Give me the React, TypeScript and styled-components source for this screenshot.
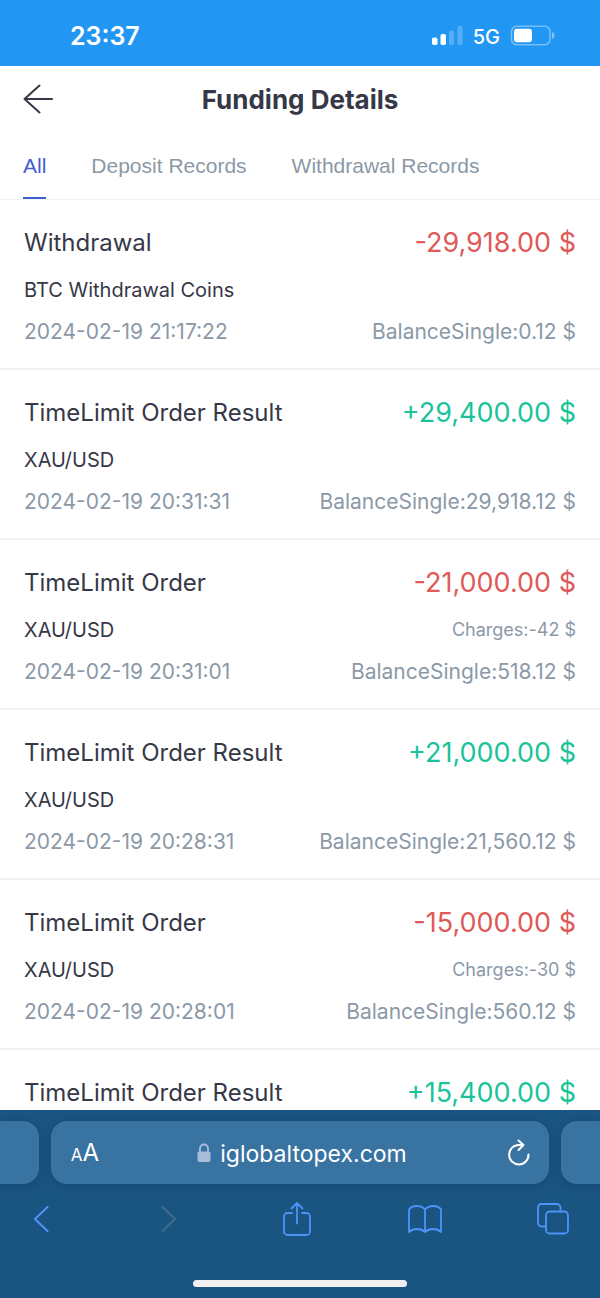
import React, { useState } from "react";
import styled, { createGlobalStyle } from "styled-components";

const colors = {
  status: "#2196f3",
  ink: "#363847",
  muted: "#8b99a7",
  accent: "#3f5fd0",
  gain: "#1cc39a",
  loss: "#de5a58",
  line: "#f1f1f3",
  chrome: "#1a5480",
  field: "#3973a1",
  tool: "#4e93fa",
};

const GlobalStyle = createGlobalStyle`
  *, *::before, *::after { box-sizing: border-box; }
  body {
    margin: 0;
    background: #fff;
    color: ${colors.ink};
    font-family: Inter, "Liberation Sans", sans-serif;
  }
  button, input { font: inherit; color: inherit; }
  h1, h2, p, ul { margin: 0; padding: 0; }
`;

const Screen = styled.div`
  display: flex;
  flex-direction: column;
  height: 100vh;
`;

const StatusBar = styled.div`
  display: flex;
  align-items: center;
  justify-content: space-between;
  flex: none;
  height: 66px;
  padding: 6px 45px 0 70px;
  background: ${colors.status};
  color: #fff;
`;

const Clock = styled.time`
  font-size: 25px;
  line-height: 32px;
  font-weight: 600;
`;

const StatusIcons = styled.div`
  display: flex;
  align-items: center;
  gap: 10px;
`;

const Network = styled.span`
  padding-top: 2px;
  font-size: 20px;
  line-height: 32px;
  font-weight: 500;
`;

const Header = styled.header`
  display: grid;
  grid-template-columns: 48px 1fr 48px;
  align-items: center;
  flex: none;
  height: 66px;
  padding: 0 16px;
`;

const IconButton = styled.button`
  display: flex;
  align-items: center;
  justify-content: center;
  width: 44px;
  height: 44px;
  padding: 0;
  border: 0;
  background: none;
  cursor: pointer;
`;

const PageTitle = styled.h1`
  padding-top: 2px;
  text-align: center;
  font-size: 26px;
  line-height: 32px;
  font-weight: 700;
`;

const Tabs = styled.nav`
  display: flex;
  gap: 45px;
  flex: none;
  height: 68px;
  padding: 0 23px;
  border-bottom: 1px solid ${colors.line};
`;

const Tab = styled.button<{ $active: boolean }>`
  padding: 0;
  border: solid transparent;
  border-width: 2px 0;
  background: none;
  font-family: "Liberation Sans", sans-serif;
  font-size: 21px;
  line-height: 24px;
  color: ${(p) => (p.$active ? colors.accent : colors.muted)};
  border-bottom-color: ${(p) => (p.$active ? colors.accent : "transparent")};
  cursor: pointer;
`;

const Records = styled.ul`
  flex: 1;
  min-height: 0;
  overflow: hidden;
  list-style: none;
`;

const Record = styled.li`
  height: 170px;
  padding: 27px 24px 0;
  border-bottom: 2px solid ${colors.line};
`;

const Line = styled.div<{ $gap?: number }>`
  display: flex;
  align-items: center;
  justify-content: space-between;
  height: 32px;
  margin-top: ${(p) => p.$gap ?? 0}px;
  line-height: 32px;
  white-space: nowrap;
`;

const Kind = styled.h2`
  font-size: 24px;
  font-weight: 400;
`;

const Amount = styled.span<{ $gain: boolean }>`
  font-size: 27px;
  color: ${(p) => (p.$gain ? colors.gain : colors.loss)};
`;

const Subject = styled.p`
  font-size: 20px;
`;

const Charges = styled.span`
  font-size: 18px;
  color: ${colors.muted};
`;

const Meta = styled.span`
  font-size: 21px;
  color: ${colors.muted};
`;

const Browser = styled.footer`
  flex: none;
  padding: 11px 0;
  background: ${colors.chrome};
`;

const AddressRow = styled.div`
  display: flex;
  gap: 12px;
`;

const NeighbourTab = styled.div<{ $side: "left" | "right" }>`
  flex: none;
  width: 39px;
  background: ${colors.field};
  border-radius: ${(p) => (p.$side === "left" ? "0 16px 16px 0" : "16px 0 0 16px")};
  box-shadow: 0 2px 10px rgba(0, 20, 60, 0.16);
`;

const AddressBar = styled.div`
  display: grid;
  grid-template-columns: 44px 1fr 44px;
  align-items: center;
  flex: 1;
  min-width: 0;
  height: 63px;
  padding: 0 8px 0 12px;
  border-radius: 16px;
  background: ${colors.field};
  color: #fff;
  box-shadow: 0 2px 10px rgba(0, 20, 60, 0.16);
`;

const TextSize = styled(IconButton)`
  align-items: baseline;
  height: 32px;
  line-height: 32px;
  font-size: 24px;
`;

const SmallA = styled.span`
  font-size: 17px;
`;

const Address = styled.label`
  display: flex;
  align-items: center;
  justify-content: center;
  gap: 9px;
`;

const AddressInput = styled.input`
  field-sizing: content;
  padding: 2px 0 0;
  border: 0;
  outline: 0;
  background: none;
  font-size: 23px;
  line-height: 32px;
`;

const Toolbar = styled.div`
  display: flex;
  justify-content: space-between;
  padding: 13px 25px 0 19px;
  color: ${colors.tool};
`;

const HomeIndicator = styled.div`
  width: 214px;
  height: 7px;
  margin: 39px auto 0;
  border-radius: 4px;
  background: #f1eff2;
`;

type Entry = {
  kind: string;
  amount: string;
  subject: string;
  charges?: string;
  time: string;
  balance: string;
};

const entries: Entry[] = [
  { kind: "Withdrawal", amount: "-29,918.00 $", subject: "BTC Withdrawal Coins", time: "2024-02-19 21:17:22", balance: "0.12 $" },
  { kind: "TimeLimit Order Result", amount: "+29,400.00 $", subject: "XAU/USD", time: "2024-02-19 20:31:31", balance: "29,918.12 $" },
  { kind: "TimeLimit Order", amount: "-21,000.00 $", subject: "XAU/USD", charges: "-42 $", time: "2024-02-19 20:31:01", balance: "518.12 $" },
  { kind: "TimeLimit Order Result", amount: "+21,000.00 $", subject: "XAU/USD", time: "2024-02-19 20:28:31", balance: "21,560.12 $" },
  { kind: "TimeLimit Order", amount: "-15,000.00 $", subject: "XAU/USD", charges: "-30 $", time: "2024-02-19 20:28:01", balance: "560.12 $" },
];

const partialEntry = { kind: "TimeLimit Order Result", amount: "+15,400.00 $" };

const tabs = ["All", "Deposit Records", "Withdrawal Records"];

const Heading = ({ kind, amount }: { kind: string; amount: string }) => (
  <Line>
    <Kind>{kind}</Kind>
    <Amount $gain={amount.startsWith("+")}>{amount}</Amount>
  </Line>
);

const stroke = {
  fill: "none",
  stroke: "currentColor",
  strokeLinecap: "round" as const,
  strokeLinejoin: "round" as const,
  "aria-hidden": true,
};

export default function App() {
  const [active, setActive] = useState("All");
  const [url, setUrl] = useState("iglobaltopex.com");

  return (
    <Screen>
      <GlobalStyle />
      <StatusBar>
        <Clock>23:37</Clock>
        <StatusIcons>
          <svg width="31" height="20" viewBox="0 0 31 20" fill="#fff" aria-hidden="true">
            <rect x="0" y="11.500" width="5.500" height="7.500" rx="1.800" />
            <rect x="8.500" y="8" width="5.500" height="11" rx="1.800" />
            <rect x="17" y="4.500" width="5" height="14.500" rx="1.800" opacity="0.24" />
            <rect x="25.500" y="0" width="5" height="19" rx="1.800" opacity="0.24" />
          </svg>
          <Network>5G</Network>
          <svg width="45" height="22" viewBox="0 0 45 22" aria-hidden="true">
            <rect x="1.500" y="1.200" width="38.500" height="18.600" rx="5.500" fill="none" stroke="#fff" strokeWidth="1.600" opacity="0.38" />
            <rect x="4" y="3.800" width="18" height="13.400" rx="3" fill="#fff" />
            <path d="M42 7c1.800.8 2.500 2 2.500 3.500s-.7 2.700-2.500 3.500z" fill="#fff" opacity="0.45" />
          </svg>
        </StatusIcons>
      </StatusBar>

      <Header>
        <IconButton aria-label="Back">
          <svg width="30" height="30" viewBox="0 0 30 30" {...stroke} strokeWidth="2">
            <path d="M29 15H1.500M16.500 1.500 1.500 15l15 13.500" />
          </svg>
        </IconButton>
        <PageTitle>Funding Details</PageTitle>
      </Header>

      <Tabs>
        {tabs.map((tab) => (
          <Tab key={tab} $active={tab === active} onClick={() => setActive(tab)}>
            {tab}
          </Tab>
        ))}
      </Tabs>

      <Records>
        {entries.map((e) => (
          <Record key={e.time}>
            <Heading kind={e.kind} amount={e.amount} />
            <Line $gap={15}>
              <Subject>{e.subject}</Subject>
              {e.charges && <Charges>Charges:{e.charges}</Charges>}
            </Line>
            <Line $gap={10}>
              <Meta>{e.time}</Meta>
              <Meta>BalanceSingle:{e.balance}</Meta>
            </Line>
          </Record>
        ))}
        <Record>
          <Heading {...partialEntry} />
        </Record>
      </Records>

      <Browser>
        <AddressRow>
          <NeighbourTab $side="left" />
          <AddressBar>
            <TextSize aria-label="Text size">
              <SmallA>A</SmallA>A
            </TextSize>
            <Address>
              <svg width="14" height="20" viewBox="0 0 14 20" aria-hidden="true">
                <path d="M3 9V5.500a4 4 0 0 1 8 0V9" fill="none" stroke="#a9bddb" strokeWidth="1.800" />
                <rect x="0.500" y="8.500" width="13" height="10.500" rx="2" fill="#a9bddb" />
              </svg>
              <AddressInput aria-label="Address" value={url} onChange={(e) => setUrl(e.target.value)} />
            </Address>
            <IconButton aria-label="Reload">
              <svg width="24" height="28" viewBox="0 0 24 28" {...stroke} strokeWidth="2">
                <path d="M21.500 15.500A9.700 9.700 0 1 1 11.800 6h4.700M11.500 1.500l5 4.500-5 5" />
              </svg>
            </IconButton>
          </AddressBar>
          <NeighbourTab $side="right" />
        </AddressRow>
        <Toolbar>
          <IconButton aria-label="Previous page">
            <svg width="16" height="26" viewBox="0 0 16 26" {...stroke} strokeWidth="2">
              <path d="M14.500 1 2 13l12.500 12" />
            </svg>
          </IconButton>
          <IconButton aria-label="Next page" disabled>
            <svg width="16" height="26" viewBox="0 0 16 26" {...stroke} stroke="#42698e" strokeWidth="2">
              <path d="M1.500 1 14 13 1.500 25" />
            </svg>
          </IconButton>
          <IconButton aria-label="Share">
            <svg width="28" height="36" viewBox="0 0 28 36" {...stroke} strokeWidth="1.800">
              <path d="M9 12H4.500A3.500 3.500 0 0 0 1 15.500v15A3.500 3.500 0 0 0 4.500 34h19a3.500 3.500 0 0 0 3.500-3.500v-15a3.500 3.500 0 0 0-3.500-3.500H19M14 22.500V2M8.500 7.500 14 2l5.500 5.500" />
            </svg>
          </IconButton>
          <IconButton aria-label="Bookmarks">
            <svg width="34" height="28" viewBox="0 0 34 28" {...stroke} strokeWidth="1.800">
              <path d="M17 4.500C15 2 12 1 9 1 5.500 1 2.500 2 1 4.500V27c2-2 5-3 8-3s6 1 8 3c2-2 5-3 8-3s6 1 8 3V4.500C31.500 2 28.500 1 25 1c-3 0-6 1-8 3.500zM17 4.500V27" />
            </svg>
          </IconButton>
          <IconButton aria-label="Tabs">
            <svg width="32" height="32" viewBox="0 0 32 32" {...stroke} strokeWidth="1.800">
              <rect x="9" y="8.500" width="22" height="22" rx="3.500" />
              <path d="M9 23.500H4.500A3.500 3.500 0 0 1 1 20V4.500A3.500 3.500 0 0 1 4.500 1H20a3.500 3.500 0 0 1 3.500 3.500v4" />
            </svg>
          </IconButton>
        </Toolbar>
        <HomeIndicator />
      </Browser>
    </Screen>
  );
}
